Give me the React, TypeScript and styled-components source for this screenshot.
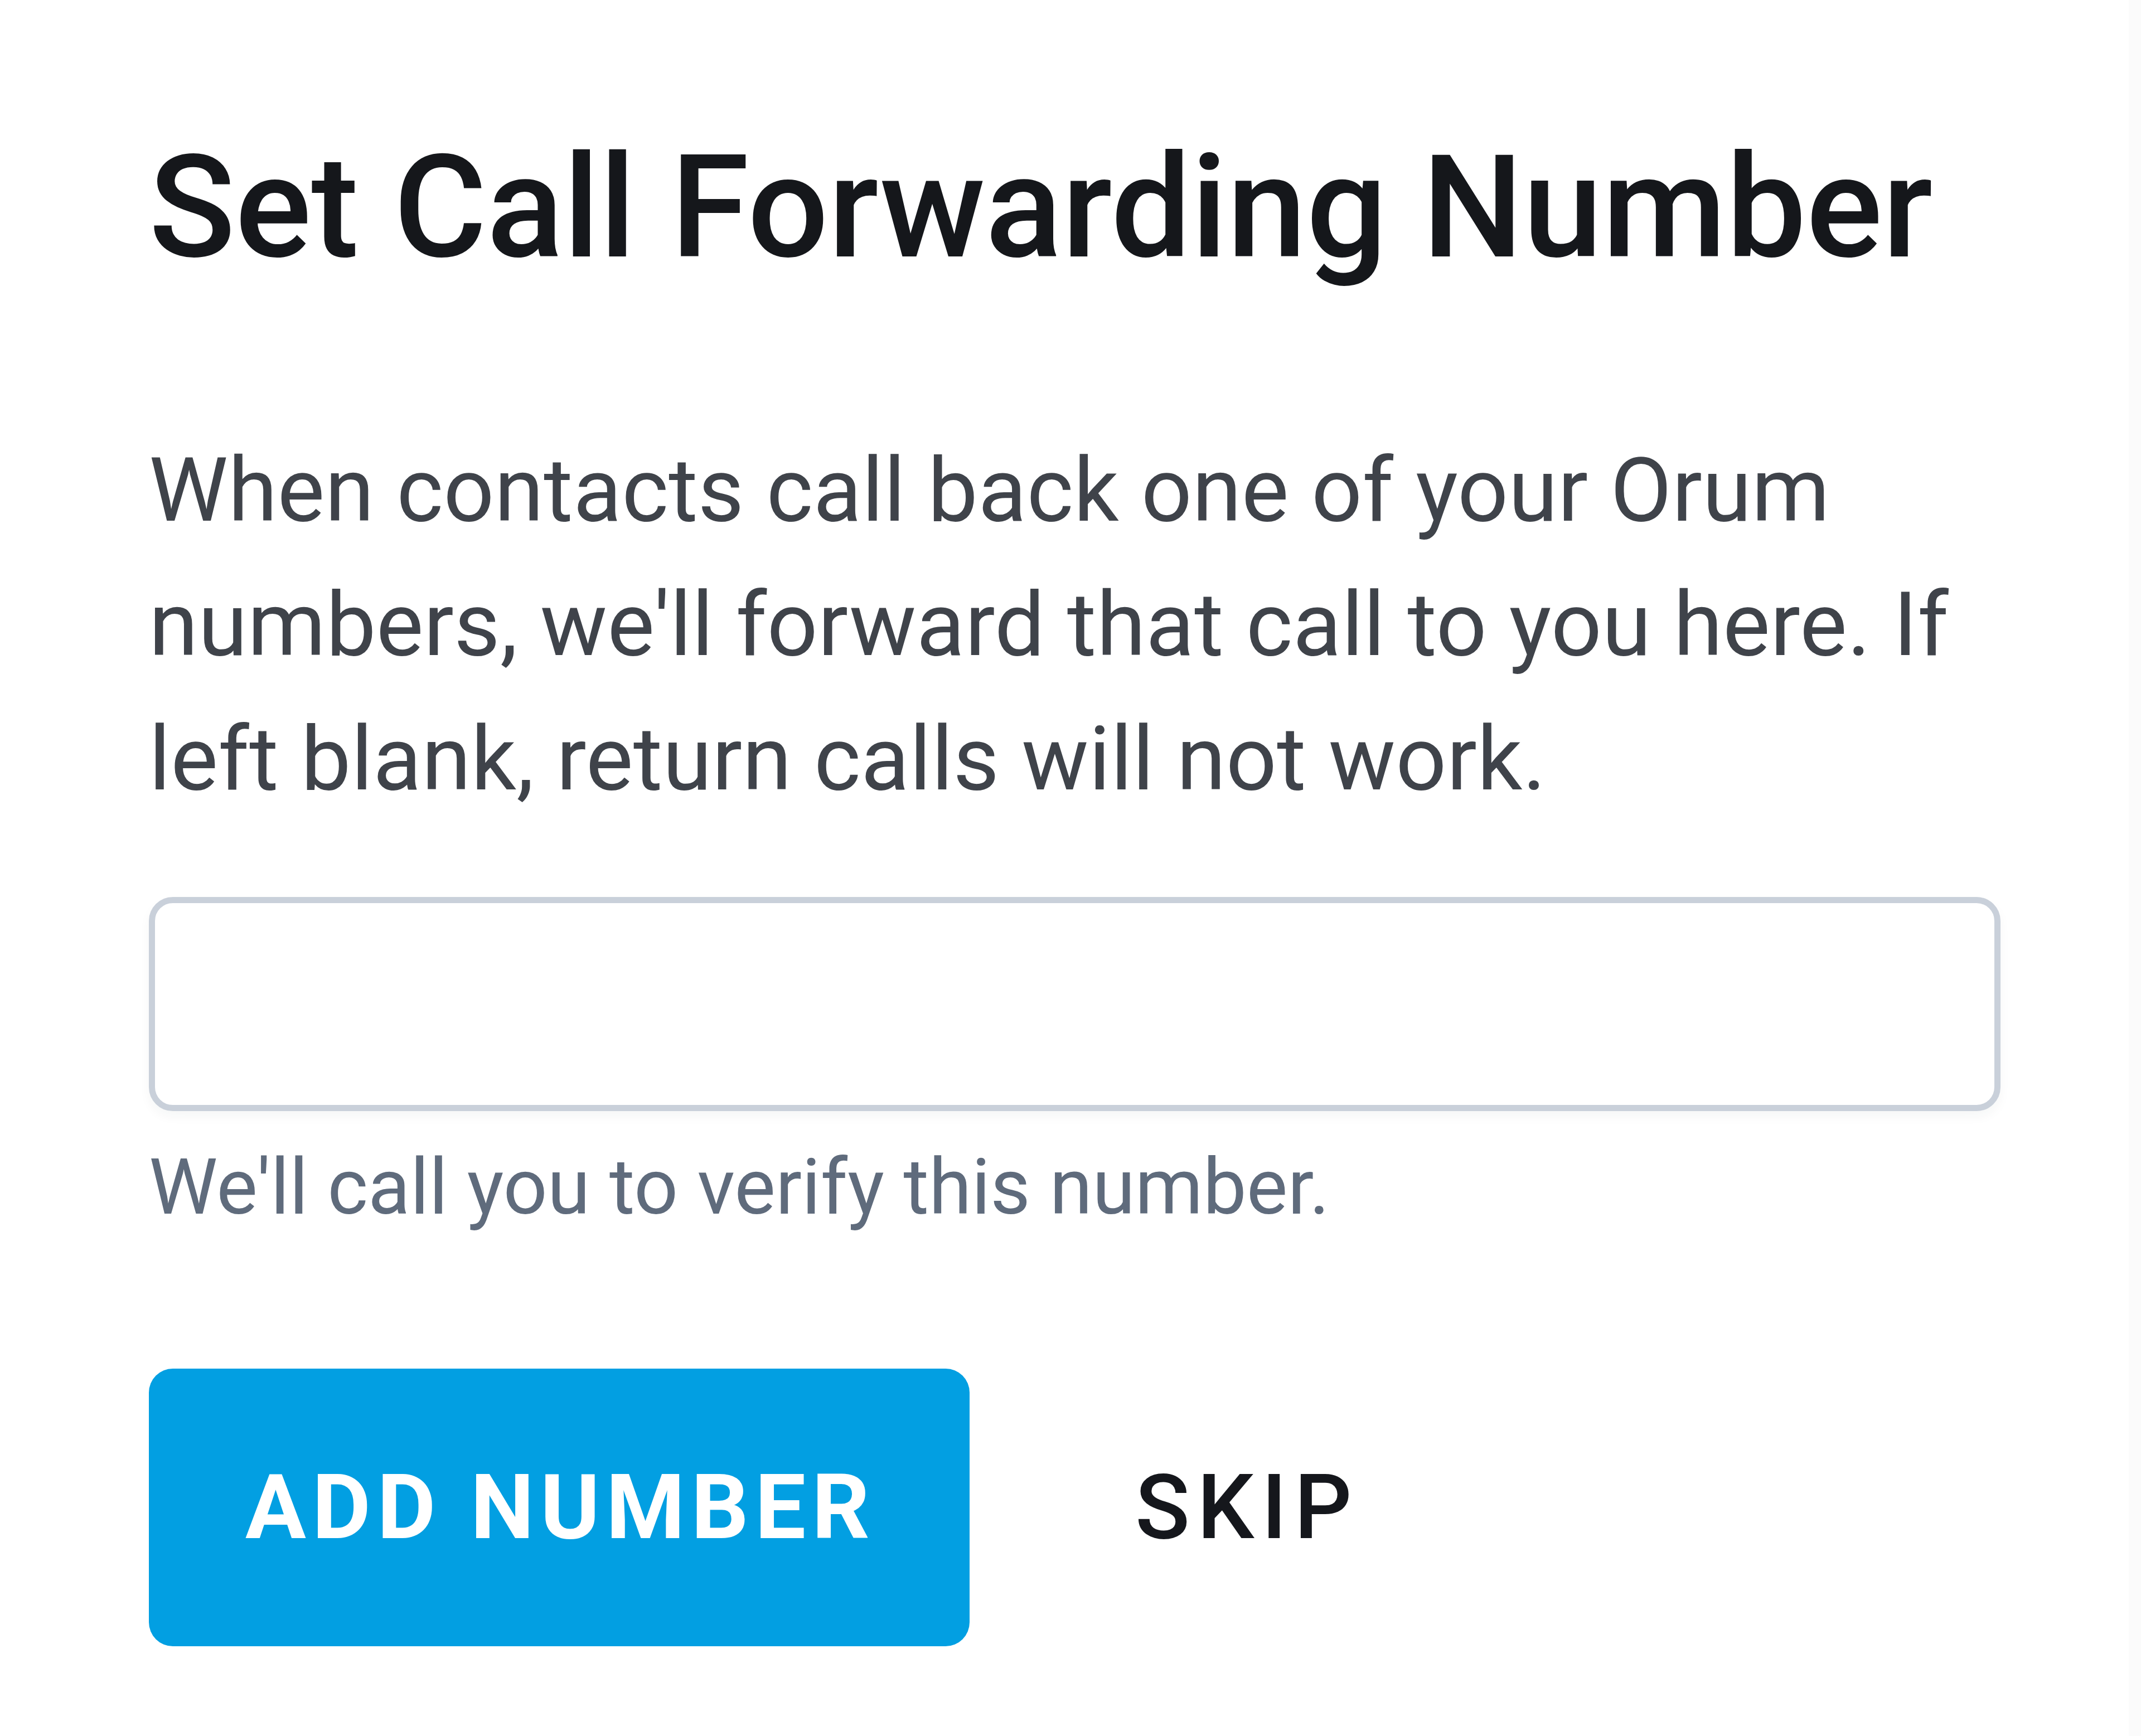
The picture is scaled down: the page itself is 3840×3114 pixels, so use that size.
import React from "react";
import styled, { createGlobalStyle } from "styled-components";

const Global = createGlobalStyle`
  html, body {
    margin: 0;
    padding: 0;
    background: #ffffff;
  }
  * { box-sizing: border-box; }
`;

const Page = styled.div`
  width: 3840px;
  min-height: 3114px;
  background: #ffffff;
  border-right: 22px solid #fbfbfb;
  padding: 219px 230px 0 267px;
  font-family: Roboto, "Liberation Sans", Arial, sans-serif;
  display: flex;
  flex-direction: column;
`;

const Title = styled.h1`
  margin: 0;
  font-size: 256px;
  line-height: 307px;
  font-weight: 500;
  color: #15171b;
  letter-spacing: -0.5px;
`;

const Description = styled.p`
  margin: 233px 0 0;
  font-size: 160px;
  line-height: 241px;
  font-weight: 400;
  color: #3f434a;
  letter-spacing: 0.25px;
`;

const Input = styled.input`
  margin-top: 127px;
  width: 100%;
  height: 384px;
  border: 11px solid #c9d0da;
  border-radius: 43px;
  background: #ffffff;
  box-shadow: 0 10px 20px rgba(30, 40, 60, 0.04);
  outline: none;
  font-family: inherit;
  font-size: 160px;
  padding: 0 120px;
`;

const Helper = styled.div`
  margin-top: 33px;
  font-size: 139px;
  line-height: 208px;
  color: #5f6b7c;
`;

const Actions = styled.div`
  margin-top: 221px;
  display: flex;
  align-items: center;
  gap: 124px;
`;

const ActionButton = styled.button<{ $primary?: boolean }>`
  height: 498px;
  border: none;
  border-radius: 43px;
  padding-left: 173px;
  padding-right: ${(p) => (p.$primary ? "168px" : "171px")};
  background: ${(p) => (p.$primary ? "#029fe2" : "transparent")};
  color: ${(p) => (p.$primary ? "#ffffff" : "#15171c")};
  font-family: Roboto, "Liberation Sans", Arial, sans-serif;
  font-weight: ${(p) => (p.$primary ? 700 : 500)};
  font-size: 162px;
  letter-spacing: ${(p) => (p.$primary ? "11px" : "13px")};
  text-transform: uppercase;
  cursor: pointer;
`;

export default function App() {
  return (
    <>
      <Global />
      <Page>
        <Title>Set Call Forwarding Number</Title>
        <Description>
          When contacts call back one of your Orum numbers, we'll forward that
          call to you here. If left blank, return calls will not work.
        </Description>
        <Input type="tel" aria-label="Call forwarding number" />
        <Helper>We'll call you to verify this number.</Helper>
        <Actions>
          <ActionButton $primary>Add Number</ActionButton>
          <ActionButton>Skip</ActionButton>
        </Actions>
      </Page>
    </>
  );
}
